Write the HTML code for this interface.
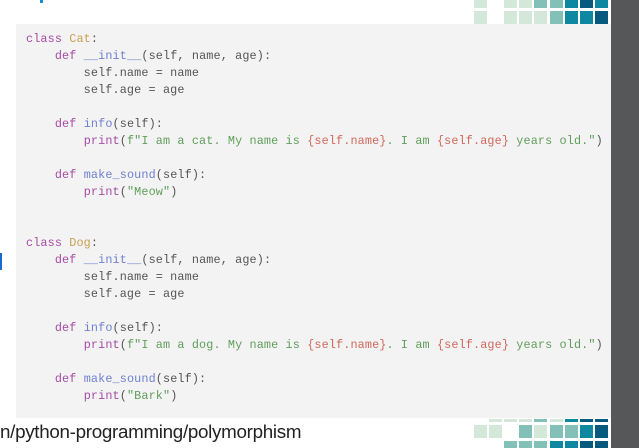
<!DOCTYPE html>
<html><head><style>
html,body{margin:0;padding:0;width:639px;height:448px;overflow:hidden;background:#fff;position:relative}
.strip{position:absolute;left:611px;top:0;width:28px;height:448px;background:#555759}
.code{position:absolute;left:16px;top:24px;width:595px;height:394px;background:#f3f3f3}
pre{position:absolute;left:26px;top:31px;margin:0;font-family:"Liberation Mono",monospace;font-size:11.8px;line-height:17px;color:#555;letter-spacing:0.13px}
.k{color:#a64ca6}.c{color:#c9a050}.f{color:#6f80d0}.s{color:#5f9e5a}.i{color:#d0685a}
.t{position:absolute;width:13px}
.a{background:#d3e8d8}.b{background:#82c0b8}.d{background:#0e87a0}.e{background:#075a7e}
.url{position:absolute;left:0;top:421px;font-family:"Liberation Sans",sans-serif;font-size:18.8px;color:#222;letter-spacing:-0.3px}
</style></head><body>
<div style="position:absolute;left:40px;top:0;width:3px;height:3px;background:#1a8ad0"></div>
<div style="position:absolute;left:0;top:253px;width:2px;height:17px;background:#1a6ad0"></div>
<div class="code"></div>
<pre><span class="k">class</span> <span class="c">Cat</span>:
    <span class="k">def</span> <span class="f">__init__</span>(self, name, age):
        self.name = name
        self.age = age

    <span class="k">def</span> <span class="f">info</span>(self):
        <span class="k">print</span>(<span class="s">f"I am a cat. My name is </span><span class="i">{self.name}</span><span class="s">. I am </span><span class="i">{self.age}</span><span class="s"> years old."</span>)

    <span class="k">def</span> <span class="f">make_sound</span>(self):
        <span class="k">print</span>(<span class="s">"Meow"</span>)


<span class="k">class</span> <span class="c">Dog</span>:
    <span class="k">def</span> <span class="f">__init__</span>(self, name, age):
        self.name = name
        self.age = age

    <span class="k">def</span> <span class="f">info</span>(self):
        <span class="k">print</span>(<span class="s">f"I am a dog. My name is </span><span class="i">{self.name}</span><span class="s">. I am </span><span class="i">{self.age}</span><span class="s"> years old."</span>)

    <span class="k">def</span> <span class="f">make_sound</span>(self):
        <span class="k">print</span>(<span class="s">"Bark"</span>)</pre>
<div class="strip"></div>
<div class="t a" style="left:474px;top:0;height:8px"></div>
<div class="t a" style="left:504px;top:0;height:8px"></div>
<div class="t a" style="left:519px;top:0;height:8px"></div>
<div class="t b" style="left:534px;top:0;height:8px"></div>
<div class="t b" style="left:550px;top:0;height:8px"></div>
<div class="t d" style="left:565px;top:0;height:8px"></div>
<div class="t e" style="left:580px;top:0;height:8px"></div>
<div class="t d" style="left:595px;top:0;height:8px"></div>
<div class="t a" style="left:474px;top:11px;height:13px"></div>
<div class="t a" style="left:504px;top:11px;height:13px"></div>
<div class="t a" style="left:519px;top:11px;height:13px"></div>
<div class="t a" style="left:534px;top:11px;height:13px"></div>
<div class="t b" style="left:550px;top:11px;height:13px"></div>
<div class="t d" style="left:565px;top:11px;height:13px"></div>
<div class="t d" style="left:580px;top:11px;height:13px"></div>
<div class="t e" style="left:595px;top:11px;height:13px"></div>
<div class="t a" style="left:489px;top:419px;height:3px"></div>
<div class="t a" style="left:504px;top:419px;height:3px"></div>
<div class="t a" style="left:519px;top:419px;height:3px"></div>
<div class="t b" style="left:534px;top:419px;height:3px"></div>
<div class="t a" style="left:550px;top:419px;height:3px"></div>
<div class="t d" style="left:565px;top:419px;height:3px"></div>
<div class="t e" style="left:580px;top:419px;height:3px"></div>
<div class="t e" style="left:595px;top:419px;height:3px"></div>
<div class="t a" style="left:474px;top:425px;height:13px"></div>
<div class="t a" style="left:489px;top:425px;height:13px"></div>
<div class="t b" style="left:519px;top:425px;height:13px"></div>
<div class="t a" style="left:534px;top:425px;height:13px"></div>
<div class="t b" style="left:550px;top:425px;height:13px"></div>
<div class="t b" style="left:565px;top:425px;height:13px"></div>
<div class="t d" style="left:580px;top:425px;height:13px"></div>
<div class="t e" style="left:595px;top:425px;height:13px"></div>
<div class="t b" style="left:504px;top:441px;height:7px"></div>
<div class="t b" style="left:519px;top:441px;height:7px"></div>
<div class="t b" style="left:534px;top:441px;height:7px"></div>
<div class="t d" style="left:550px;top:441px;height:7px"></div>
<div class="t d" style="left:565px;top:441px;height:7px"></div>
<div class="t e" style="left:580px;top:441px;height:7px"></div>
<div class="t e" style="left:595px;top:441px;height:7px"></div>
<div class="url">n/python-programming/polymorphism</div>
</body></html>
